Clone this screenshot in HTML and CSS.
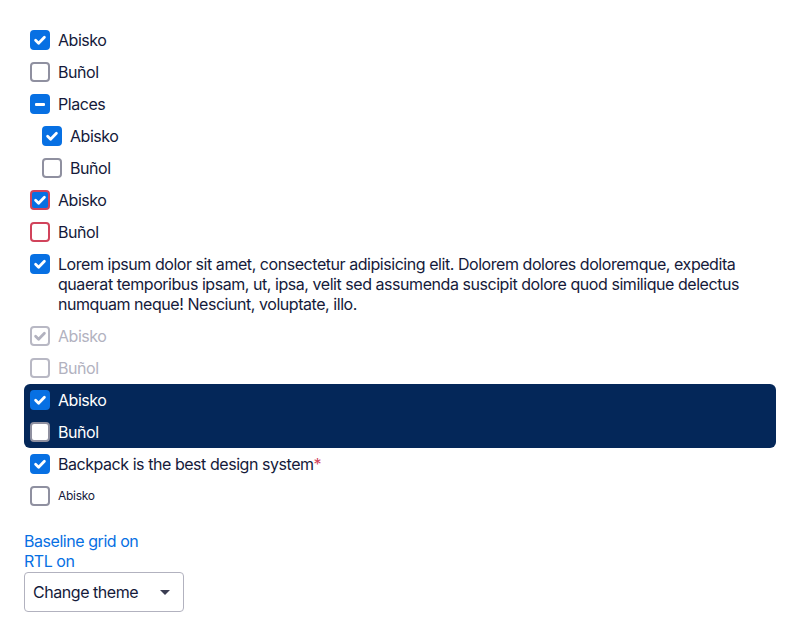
FILE: index.html
```html
<!DOCTYPE html>
<html>
<head>
<meta charset="utf-8">
<link rel="stylesheet" href="styles.css">
</head>
<body>
<div class="page">
  <div class="row"><span class="box checked"><svg viewBox="0 0 20 20"><path d="M5.6 10.3 L8.6 13.2 L14.4 7.2"/></svg></span><span class="label">Abisko</span></div>
  <div class="row"><span class="box"></span><span class="label">Buñol</span></div>
  <div class="row"><span class="box checked"><span class="bar"></span></span><span class="label">Places</span></div>
  <div class="row nested"><span class="box checked"><svg viewBox="0 0 20 20"><path d="M5.6 10.3 L8.6 13.2 L14.4 7.2"/></svg></span><span class="label">Abisko</span></div>
  <div class="row nested"><span class="box"></span><span class="label">Buñol</span></div>
  <div class="row"><span class="box checked error"><svg viewBox="0 0 20 20"><path d="M5.6 10.3 L8.6 13.2 L14.4 7.2"/></svg></span><span class="label">Abisko</span></div>
  <div class="row"><span class="box error"></span><span class="label">Buñol</span></div>
  <div class="row"><span class="box checked"><svg viewBox="0 0 20 20"><path d="M5.6 10.3 L8.6 13.2 L14.4 7.2"/></svg></span><span class="label">Lorem ipsum dolor sit amet, consectetur adipisicing elit. Dolorem dolores doloremque, expedita quaerat temporibus ipsam, ut, ipsa, velit sed assumenda suscipit dolore quod similique delectus numquam neque! Nesciunt, voluptate, illo.</span></div>
  <div class="row disabled"><span class="box"><svg viewBox="0 0 20 20"><path d="M5.6 10.3 L8.6 13.2 L14.4 7.2"/></svg></span><span class="label">Abisko</span></div>
  <div class="row disabled"><span class="box"></span><span class="label">Buñol</span></div>
  <div class="dark">
    <div class="row"><span class="box checked"><svg viewBox="0 0 20 20"><path d="M5.6 10.3 L8.6 13.2 L14.4 7.2"/></svg></span><span class="label">Abisko</span></div>
    <div class="row"><span class="box"></span><span class="label">Buñol</span></div>
  </div>
  <div class="row"><span class="box checked"><svg viewBox="0 0 20 20"><path d="M5.6 10.3 L8.6 13.2 L14.4 7.2"/></svg></span><span class="label">Backpack is the best design system<span class="req">*</span></span></div>
  <div class="row small"><span class="box"></span><span class="label">Abisko</span></div>
  <div class="links">
    <a class="link">Baseline grid on</a>
    <a class="link">RTL on</a>
  </div>
  <div class="select"><span>Change theme</span><span class="caret"></span></div>
</div>
</body>
</html>
```
FILE: styles.css
```css
html, body { margin: 0; padding: 0; background: #fff; }
body { font-family: "Inter", "Noto Sans", sans-serif; color: #151a3a; font-size: 16px; letter-spacing: -0.45px; }
.page { padding: 24px; }
.row { display: flex; align-items: flex-start; gap: 8px; padding: 6px 6px; line-height: 20px; }
.row.nested { padding-left: 18px; }
.box { flex: 0 0 auto; width: 20px; height: 20px; box-sizing: border-box; border: 2px solid #8f90a0; border-radius: 4px; background: #fff; display: flex; align-items: center; justify-content: center; position: relative; }
.box svg { position: absolute; left: -2px; top: -2px; width: 20px; height: 20px; }
.box svg path { fill: none; stroke: #fff; stroke-width: 2.8; stroke-linecap: round; stroke-linejoin: round; }
.box.checked { background: #0770e3; border-color: #0770e3; }
.box.error { border-color: #d1435b; }
.bar { width: 10px; height: 3px; background: #fff; border-radius: 1px; }
.disabled { color: #b2b2bf; }
.disabled .box { border-color: #b8b8c4; }
.disabled .box svg path { stroke: #b2b2bf; }
.dark { background: #042759; border-radius: 6px; color: #fff; }
.dark .box:not(.checked) { border-color: #8f90a0; }
.req { color: #d1435b; }
.small .label { font-size: 12px; letter-spacing: -0.3px; }
.links { display: flex; flex-direction: column; align-items: flex-start; margin-top: 19px; line-height: 20px; }
.link { color: #0770e3; }
.select { margin-top: 1px; width: 160px; height: 40px; box-sizing: border-box; border: 1px solid #b2b2bf; border-radius: 4px; display: flex; align-items: center; justify-content: space-between; padding: 0 12px 0 8px; }
.caret { width: 0; height: 0; border-left: 5px solid transparent; border-right: 5px solid transparent; border-top: 5px solid #3b3d52; margin-right: 1px; }
```
